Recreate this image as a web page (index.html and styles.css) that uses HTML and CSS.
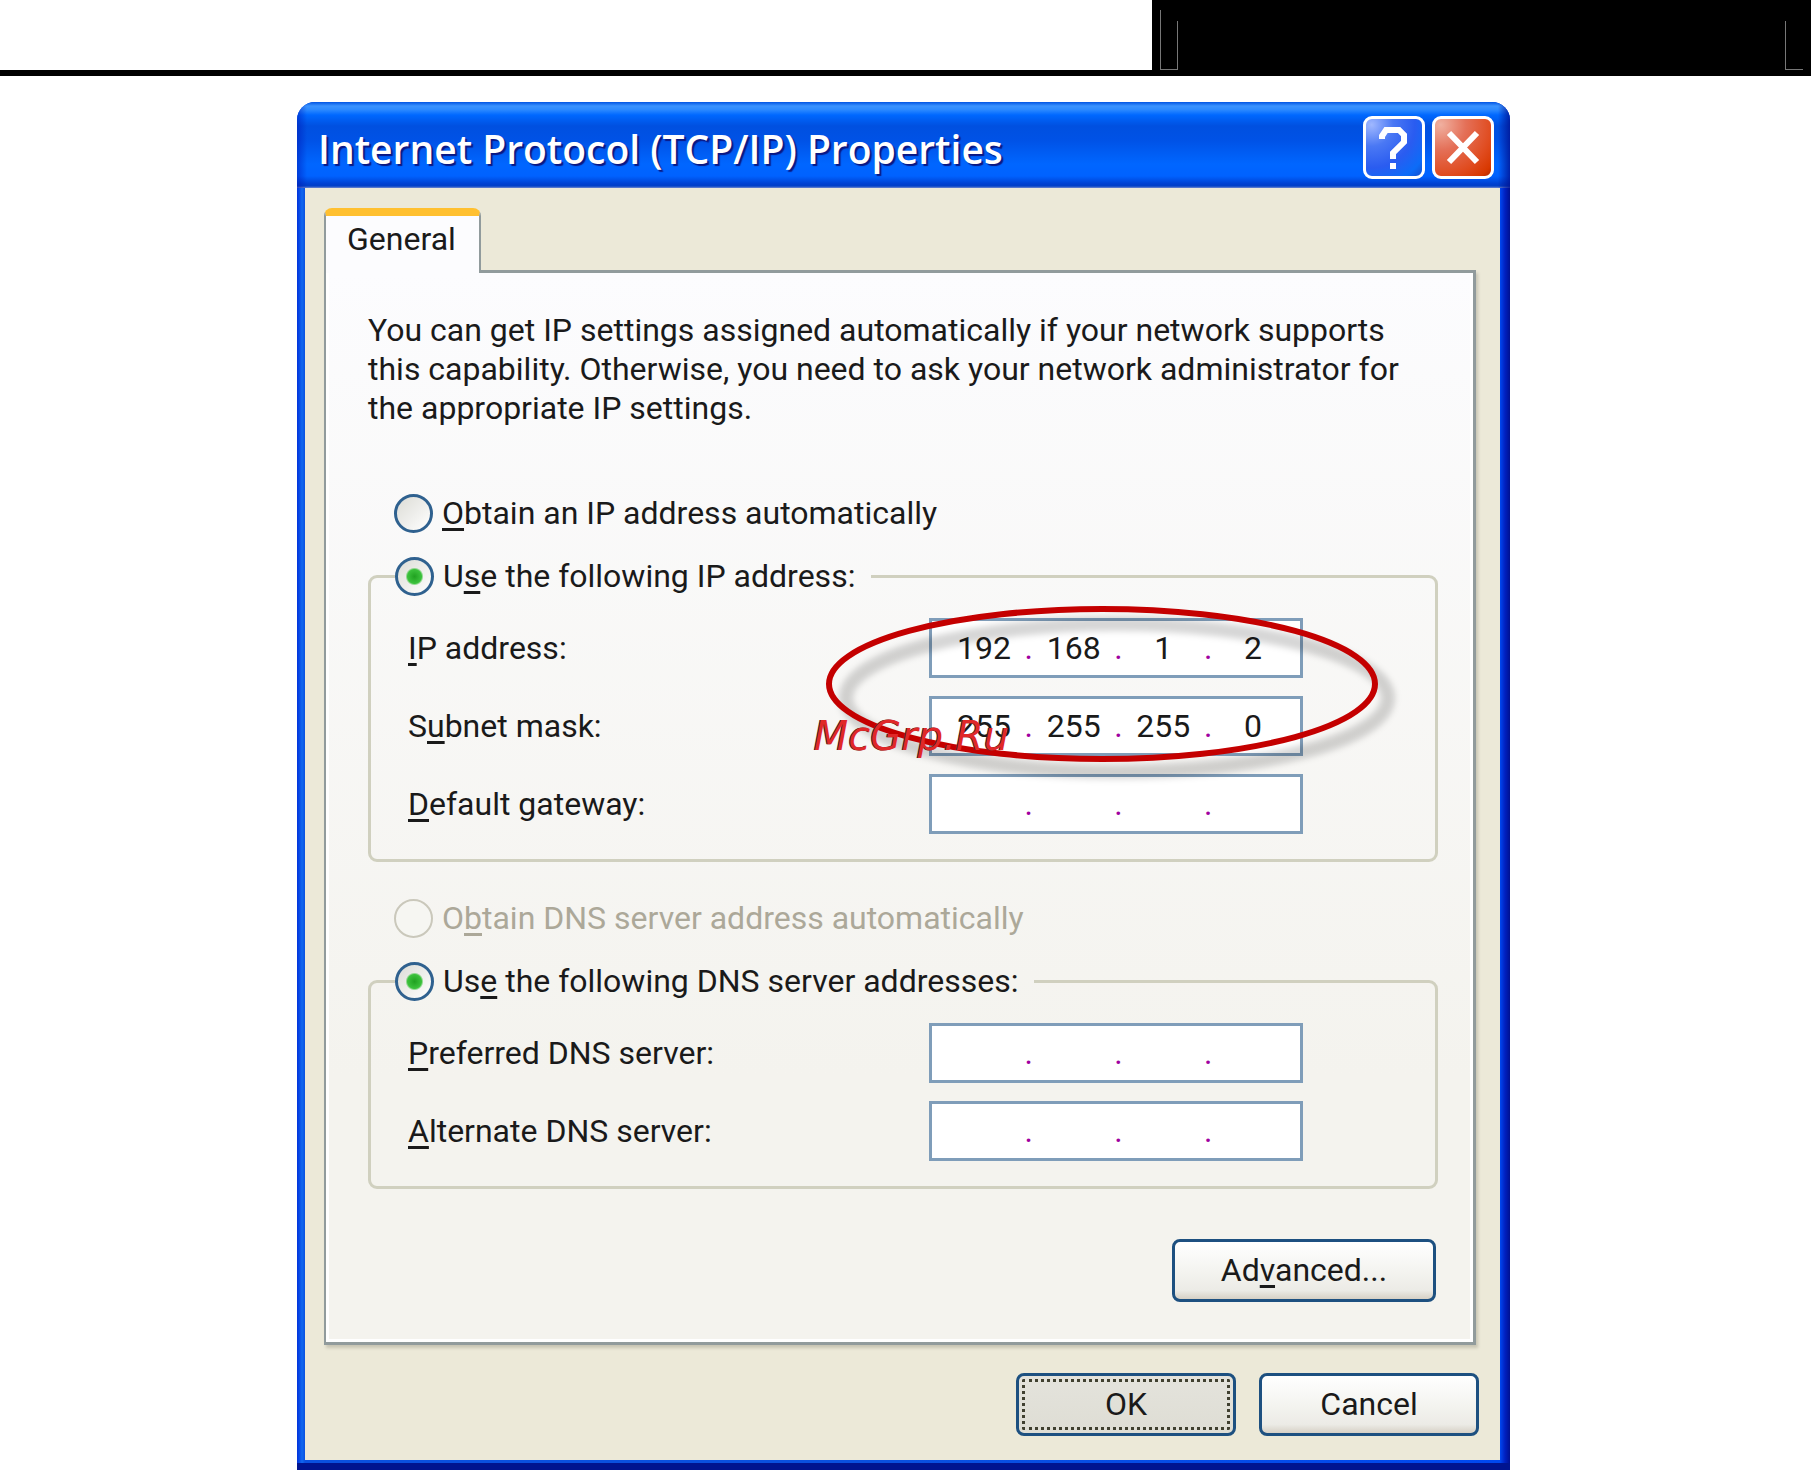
FILE: index.html
```html
<!DOCTYPE html>
<html lang="en">
<head>
  <meta charset="UTF-8" />
  <title>Internet Protocol (TCP/IP) Properties</title>
  <link rel="stylesheet" href="styles.css">
</head>
<body>
  <header class="page-header">
    <div class="header-block">
      <span class="line-left"></span>
      <span class="line-middle"></span>
      <span class="line-right"></span>
    </div>
  </header>

  <main class="page">
    <section class="dialog">
      <div class="title-bar">
        <h1>Internet Protocol (TCP/IP) Properties</h1>
        <button class="title-btn help-btn" aria-label="Help">
          <svg viewBox="0 0 56 57"><path d="M16 20 V17 L20 11 H33 L38 16 V23 L27 34 V40" /><path d="M27 44 V50" /></svg>
        </button>
        <button class="title-btn close-btn" aria-label="Close">
          <svg viewBox="0 0 56 57"><path d="M14 14 L42 43 M42 14 L14 43" /></svg>
        </button>
      </div>

      <div class="dialog-body">
        <button class="tab">General</button>

        <div class="panel">
          <p class="intro">You can get IP settings assigned automatically if your network supports<br>
            this capability. Otherwise, you need to ask your network administrator for<br>
            the appropriate IP settings.</p>

          <div class="option">
            <input type="radio" name="ip" id="ip-auto">
            <label for="ip-auto"><u>O</u>btain an IP address automatically</label>
          </div>

          <fieldset class="group">
            <legend>
              <input type="radio" name="ip" id="ip-manual" checked>
              <label for="ip-manual">U<u>s</u>e the following IP address:</label>
            </legend>
            <div class="rows">
              <div class="row">
                <label for="ip1"><u>I</u>P address:</label>
                <div class="ip-box">
                  <input type="text" id="ip1" value="192"><span>.</span>
                  <input type="text" aria-label="IP address 2" value="168"><span>.</span>
                  <input type="text" aria-label="IP address 3" value="1"><span>.</span>
                  <input type="text" aria-label="IP address 4" value="2">
                </div>
              </div>
              <div class="row">
                <label for="mask1">S<u>u</u>bnet mask:</label>
                <div class="ip-box">
                  <input type="text" id="mask1" value="255"><span>.</span>
                  <input type="text" aria-label="Subnet mask 2" value="255"><span>.</span>
                  <input type="text" aria-label="Subnet mask 3" value="255"><span>.</span>
                  <input type="text" aria-label="Subnet mask 4" value="0">
                </div>
              </div>
              <div class="row">
                <label for="gw1"><u>D</u>efault gateway:</label>
                <div class="ip-box">
                  <input type="text" id="gw1"><span>.</span>
                  <input type="text" aria-label="Default gateway 2"><span>.</span>
                  <input type="text" aria-label="Default gateway 3"><span>.</span>
                  <input type="text" aria-label="Default gateway 4">
                </div>
              </div>
              <!-- red ring around the two addresses -->
              <svg class="ring" viewBox="0 0 600 200">
                <ellipse class="ring-shadow" cx="298" cy="98" rx="271" ry="74" />
                <ellipse class="ring-line" cx="283" cy="84" rx="273" ry="75" />
              </svg>
              <span class="watermark">McGrp.Ru</span>
            </div>
          </fieldset>

          <div class="option disabled">
            <input type="radio" name="dns" id="dns-auto" disabled>
            <label for="dns-auto">O<u>b</u>tain DNS server address automatically</label>
          </div>

          <fieldset class="group">
            <legend>
              <input type="radio" name="dns" id="dns-manual" checked>
              <label for="dns-manual">Us<u>e</u> the following DNS server addresses:</label>
            </legend>
            <div class="rows">
              <div class="row">
                <label for="dns1"><u>P</u>referred DNS server:</label>
                <div class="ip-box">
                  <input type="text" id="dns1"><span>.</span>
                  <input type="text" aria-label="Preferred DNS 2"><span>.</span>
                  <input type="text" aria-label="Preferred DNS 3"><span>.</span>
                  <input type="text" aria-label="Preferred DNS 4">
                </div>
              </div>
              <div class="row">
                <label for="alt1"><u>A</u>lternate DNS server:</label>
                <div class="ip-box">
                  <input type="text" id="alt1"><span>.</span>
                  <input type="text" aria-label="Alternate DNS 2"><span>.</span>
                  <input type="text" aria-label="Alternate DNS 3"><span>.</span>
                  <input type="text" aria-label="Alternate DNS 4">
                </div>
              </div>
            </div>
          </fieldset>

          <div class="panel-actions">
            <button class="btn btn-wide">Ad<u>v</u>anced...</button>
          </div>
        </div>

        <div class="dialog-actions">
          <button class="btn btn-focus">OK</button>
          <button class="btn">Cancel</button>
        </div>
      </div>
    </section>
  </main>
</body>
</html>
```
FILE: styles.css
```css
* {
  box-sizing: border-box;
}

body {
  margin: 0;
  background: white;
  color: #1a1a1a;
  font-family: Roboto, sans-serif;
  font-size: 32px;
  line-height: 39px;
}

input,
button {
  font: inherit;
  color: inherit;
}

u {
  text-decoration-thickness: 3px;
  text-underline-offset: 4px;
  text-decoration-skip-ink: none;
}

/* page header */
.page-header {
  display: flex;
  justify-content: flex-end;
  height: 76px;
  border-bottom: 6px solid black;
}

.header-block {
  display: flex;
  align-items: flex-end;
  width: 36.4%;
  padding: 0 8px;
  background: black;
}

.line-left {
  width: 17px;
  height: 60px;
  border-left: 1px solid #777;
  border-bottom: 1px solid #777;
}

.line-middle {
  flex: 1;
  height: 49px;
  border-left: 1px solid #777;
  border-right: 1px solid #777;
}

.line-right {
  width: 17px;
  border-bottom: 1px solid #777;
}

/* dialog */
.page {
  padding: 26px 4px 0 0;
}

.dialog {
  max-width: 1213px;
  margin: 0 auto;
  padding-bottom: 3px;
  border-bottom: 7px solid #001490;
  border-radius: 18px 18px 0 0;
  overflow: hidden;
  background: linear-gradient(to right, #0030dc 0, #1068f0 5px, #0a50e0 8px, #0a50e0 50%, #0048f0 calc(100% - 10px), #0020c0 calc(100% - 5px), #001090 100%);
}

.title-bar {
  display: flex;
  align-items: center;
  gap: 7px;
  height: 86px;
  padding: 4px 16px 0 21px;
  background:
    linear-gradient(to right, rgba(0, 20, 180, 0.5) 0, transparent 10px, transparent calc(100% - 12px), rgba(0, 16, 144, 0.8) 100%),
    linear-gradient(#0054e3 0, #3a93ff 4px, #2a88ff 8px, #0068ff 13px, #0050e0 24px, #0052e6 38px, #0066ff 62px, #0062ff 74px, #0040d0 82px, #0040c8 84px, #7088d0 86px);
}

.title-bar h1 {
  flex: 1;
  margin: 0;
  padding-top: 4px;
  color: white;
  font-family: "Open Sans", sans-serif;
  font-size: 39px;
  font-weight: 600;
  line-height: 48px;
  text-shadow: 2px 2px 1px #0a1883;
}

.title-btn {
  width: 62px;
  height: 63px;
  padding: 0;
  border: 3px solid white;
  border-radius: 9px;
}

.title-btn svg {
  display: block;
  fill: none;
  stroke: white;
  stroke-width: 6;
}

.help-btn {
  background: radial-gradient(circle at 10% 10%, #a0b8ff 0, #4a78f4 30%, #2a5cf0 60%, #0c6cf8 85%, #1450d0 100%);
}

.close-btn {
  background: radial-gradient(circle at 10% 10%, #f0b0a0 0, #e47058 35%, #e04c20 70%, #d83800 90%, #b02800 100%);
}

.dialog-body {
  margin: 0 10px 0 8px;
  padding: 20px 21px 24px 19px;
  background: #ece9d8;
}

.tab {
  display: block;
  position: relative; /* sits over the panel border */
  z-index: 1;
  height: 65px;
  margin-bottom: -3px;
  padding: 2px 23px 12px 21px;
  border: 2px solid #919b9c;
  border-top: 8px solid #ffc030;
  border-bottom: 0;
  border-radius: 8px 8px 0 0;
  background: linear-gradient(#fcfcfe, #fcfcfe) padding-box, linear-gradient(#e89030 0, #ffc83c 8px) border-box;
}

.panel {
  margin-right: 3px;
  padding: 38px 35px 40px 42px;
  border: 3px solid #919b9c;
  border-left-width: 2px;
  background: linear-gradient(#fcfcfe, #f4f3ee 75%);
  box-shadow: 2px 3px 3px #c8c5b4, inset -3px -3px 0 white, inset 3px 0 0 white;
}

.intro {
  margin: 0 0 66px;
}

.option,
legend {
  display: flex;
  align-items: center;
  gap: 9px;
}

.option {
  margin-left: 26px;
}

input[type="radio"] {
  appearance: none;
  width: 39px;
  height: 39px;
  margin: 0;
  border: 3px solid #2f618f;
  border-radius: 50%;
  background: linear-gradient(135deg, #dcdcd6, white);
}

input[type="radio"]:checked {
  background: radial-gradient(circle, #21a121 0, #3cc23c 7px, transparent 9px), linear-gradient(135deg, #dcdcd6, white);
}

.disabled {
  color: #aca899;
}

.disabled input[type="radio"] {
  border: 2px solid #cac8bb;
  background: #f6f6f2;
}

.group {
  min-width: 0;
  margin: 24px 0 37px;
  padding: 22px 132px 25px 37px;
  border: 3px solid #d0d0bf;
  border-radius: 9px;
}

legend {
  margin-left: -13px;
  padding: 0 16px 0 0;
}

.rows {
  display: grid;
  gap: 18px;
  position: relative;
}

.row {
  display: flex;
  align-items: center;
  justify-content: space-between;
}

.ip-box {
  display: flex;
  align-items: center;
  width: 374px;
  height: 60px;
  padding: 0 10px 0 15px;
  border: 3px solid #7f9db9;
  background: white;
}

.ip-box input {
  width: 74px;
  padding: 0;
  border: 0;
  background: none;
  text-align: center;
}

.ip-box span {
  width: 16px;
  color: #a000a0;
  text-align: center;
}

.ring {
  position: absolute;
  top: -18px;
  right: -116px;
  width: 600px;
  height: 200px;
  fill: none;
  pointer-events: none;
}

.ring-line {
  stroke: #c40000;
  stroke-width: 6;
}

.ring-shadow {
  stroke: rgba(0, 0, 0, 0.16);
  stroke-width: 14;
  filter: blur(3px);
}

.watermark {
  position: absolute;
  top: 99px;
  right: 294px;
  color: #e02828;
  font-family: "DejaVu Sans", sans-serif;
  font-size: 40px;
  font-style: italic;
  text-shadow: -1px 0 0 #402020;
}

.btn {
  width: 220px;
  height: 63px;
  padding: 0;
  border: 3px solid #1d5080;
  border-radius: 8px;
  background: linear-gradient(white, #f4f4f0 50%, #ecebe6 85%, #d6d0c5);
}

.btn-wide {
  width: 264px;
}

.btn-focus {
  background: linear-gradient(#e4e3dc, #deddd4);
  outline: 3px dotted #404030;
  outline-offset: -9px;
}

.panel-actions {
  display: flex;
  justify-content: flex-end;
  margin-top: 50px;
  padding-right: 2px;
}

.dialog-actions {
  display: flex;
  justify-content: flex-end;
  gap: 23px;
  margin-top: 28px;
}
```
